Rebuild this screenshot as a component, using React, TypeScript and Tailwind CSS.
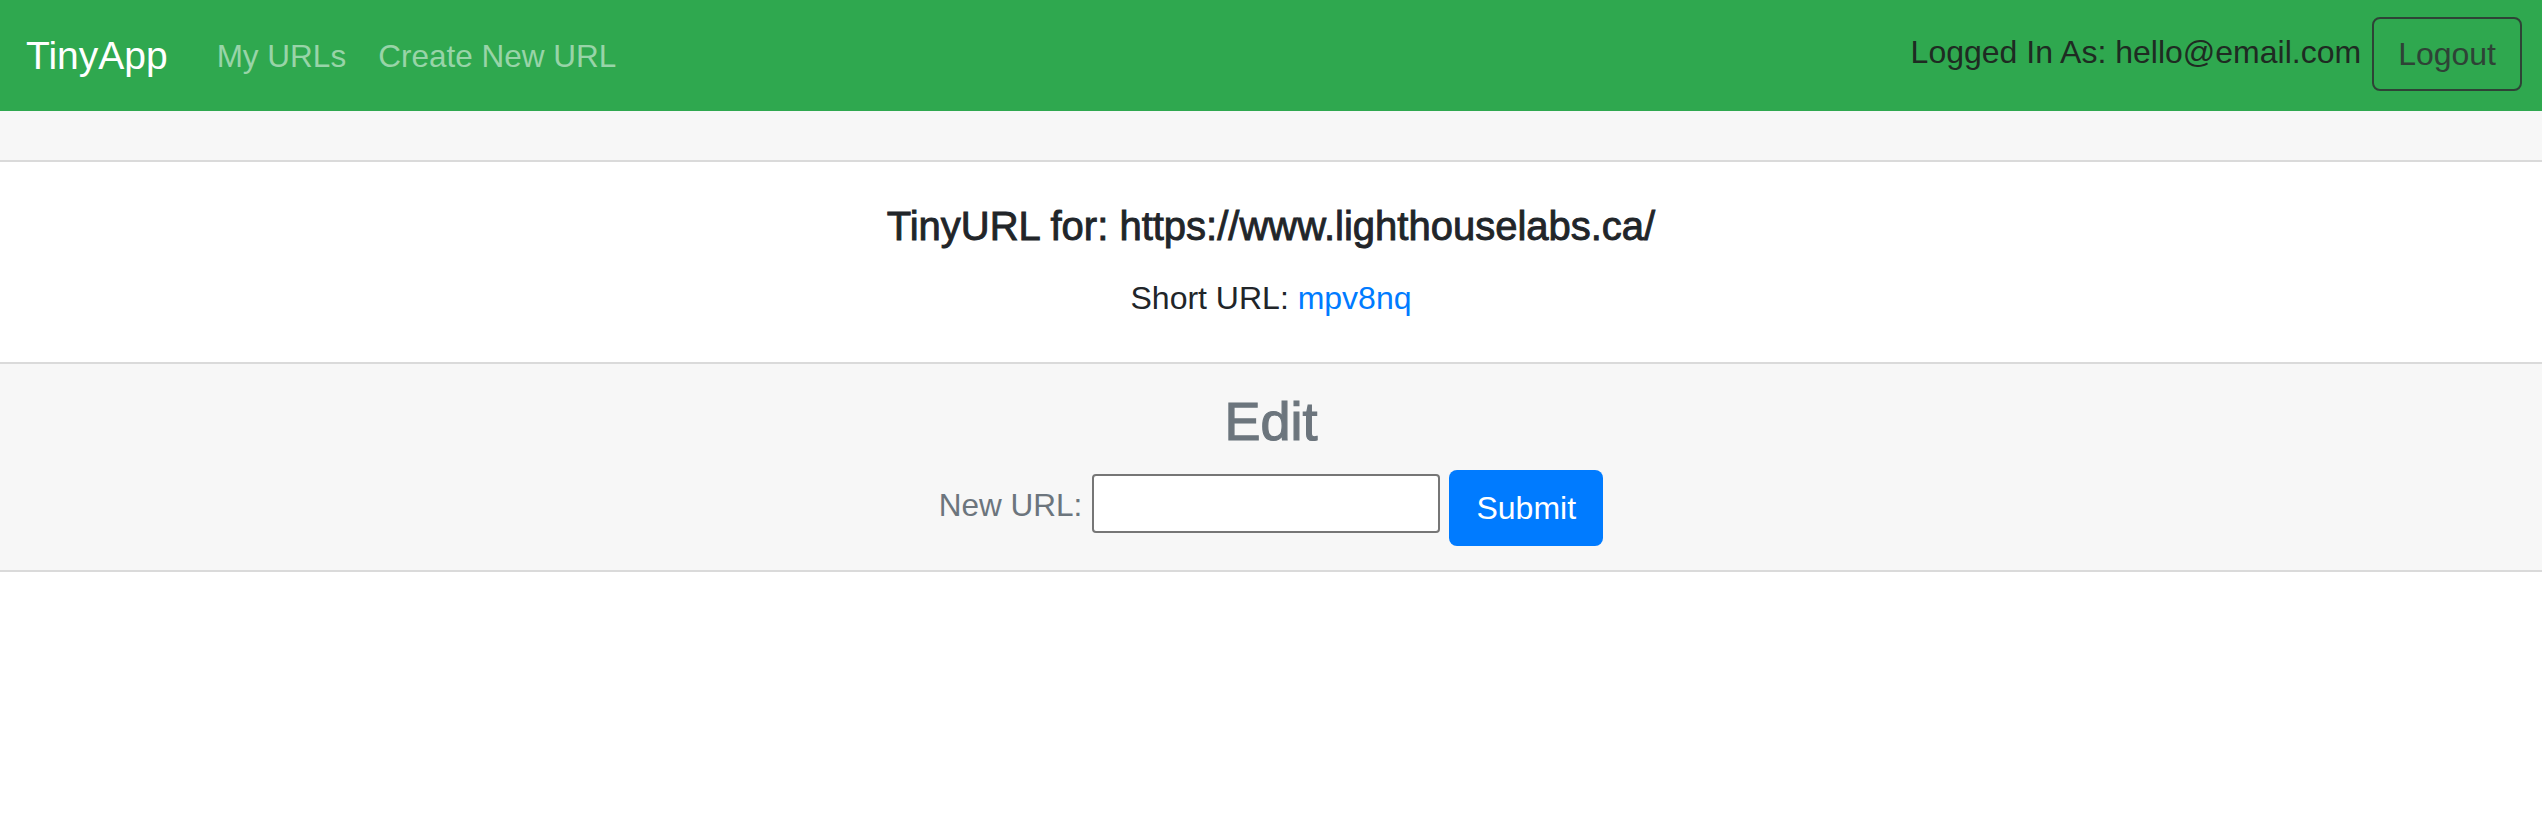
import React from 'react';

const font = { fontFamily: '"Liberation Sans", Arial, sans-serif' };

const Navbar = () => {
  return (
    <nav className="flex items-center justify-between h-[111px] bg-[#2fa84f] pl-[26px] pr-[20px]">
      <div className="flex items-center">
        <a href="#" className="text-[39px] leading-[48px] text-white mr-[33px]">TinyApp</a>
        <a href="#" className="text-[31.5px] leading-[48px] text-[#98d4a8] px-[16px]">My URLs</a>
        <a href="#" className="text-[31.5px] leading-[48px] text-[#98d4a8] px-[16px]">Create New URL</a>
      </div>
      <div className="flex items-center">
        <span className="text-[32px] leading-[48px] text-[#1e2b22] mb-[7px] mr-[11px]">Logged In As: hello@email.com</span>
        <button className="h-[74px] px-[24px] border-2 border-[#2e4336] rounded-[8px] text-[32px] leading-[48px] text-[#2e4336] mb-[3px]">
          Logout
        </button>
      </div>
    </nav>
  );
};

const App = () => {
  return (
    <div className="min-h-screen bg-white text-[#212529]" style={font}>
      <Navbar />

      <div className="h-[51px] bg-[#f7f7f7] border-b-2 border-[#dadada]" />

      <div className="pt-[40px] pb-[40px] text-center">
        <h2 className="text-[40px] leading-[48px] font-medium [-webkit-text-stroke:0.9px_#212529] mb-[24px]">
          TinyURL for: https://www.lighthouselabs.ca/
        </h2>
        <p className="text-[32px] leading-[48px]">
          Short URL: <a href="#" className="text-[#007bff]">mpv8nq</a>
        </p>
      </div>

      <div className="bg-[#f7f7f7] border-y-2 border-[#dadada] pt-[24px] pb-[24px] text-center">
        <h3 className="text-[54px] leading-[67px] font-medium text-[#6c757d] [-webkit-text-stroke:1.2px_#6c757d] mb-[15px]">
          Edit
        </h3>
        <form className="flex justify-center items-start" onSubmit={(e) => e.preventDefault()}>
          <label className="text-[31.5px] leading-[48px] text-[#6c757d] mt-[11px] mr-[10px]">New URL:</label>
          <input
            type="text"
            className="w-[348px] h-[59px] mt-[4px] bg-white border-2 border-[#767676] rounded-[4px] px-[4px] text-[32px] outline-none"
          />
          <button
            type="submit"
            className="ml-[9px] w-[154px] h-[76px] bg-[#007bff] rounded-[8px] text-white text-[32px] leading-[48px]"
          >
            Submit
          </button>
        </form>
      </div>
    </div>
  );
};

export default App;
